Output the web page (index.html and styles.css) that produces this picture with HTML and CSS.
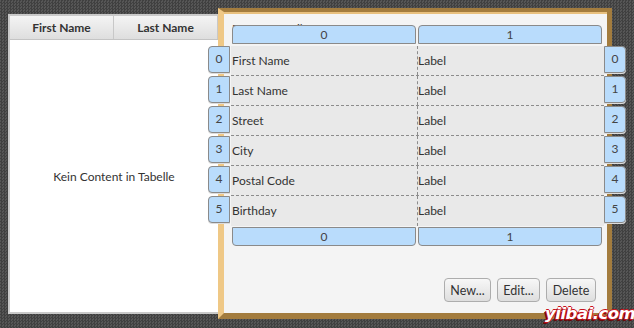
FILE: index.html
```html
<!DOCTYPE html>
<html lang="de">
  <head>
    <meta charset="UTF-8" />
    <title>Person Overview</title>
    <link rel="stylesheet" href="styles.css">
  </head>
  <body>
    <div class="tabelle">
      <div class="kopf">
        <div class="spalte">First Name</div>
        <div class="spalte">Last Name</div>
      </div>
      <div class="leer">Kein Content in Tabelle</div>
    </div>

    <div class="rahmen">
      <div class="blatt">
        <span class="titel">Person Details</span>

        <div class="spalten oben">
          <div class="sp">0</div>
          <div class="sp">1</div>
        </div>

        <div class="raster">
          <div class="zeile"><span class="nr links">0</span><span class="zelle">First Name</span><span class="zelle">Label</span><span class="nr rechts">0</span></div>
          <div class="zeile"><span class="nr links">1</span><span class="zelle">Last Name</span><span class="zelle">Label</span><span class="nr rechts">1</span></div>
          <div class="zeile"><span class="nr links">2</span><span class="zelle">Street</span><span class="zelle">Label</span><span class="nr rechts">2</span></div>
          <div class="zeile"><span class="nr links">3</span><span class="zelle">City</span><span class="zelle">Label</span><span class="nr rechts">3</span></div>
          <div class="zeile"><span class="nr links">4</span><span class="zelle">Postal Code</span><span class="zelle">Label</span><span class="nr rechts">4</span></div>
          <div class="zeile"><span class="nr links">5</span><span class="zelle">Birthday</span><span class="zelle">Label</span><span class="nr rechts">5</span></div>
        </div>

        <div class="spalten unten">
          <div class="sp">0</div>
          <div class="sp">1</div>
        </div>

        <div class="knoepfe">
          <button class="neu">New...</button>
          <button class="bearbeiten">Edit...</button>
          <button class="loeschen">Delete</button>
        </div>
      </div>
    </div>

    <div class="wasserzeichen">yiibai.com</div>
  </body>
</html>
```

FILE: styles.css
```css
* {
  margin: 0;
  padding: 0;
  box-sizing: border-box;
}

body {
  width: 634px;
  height: 328px;
  overflow: hidden;
  display: flex;
  align-items: flex-start;
  font-family: Lato, "Liberation Sans", sans-serif;
  font-size: 12px;
  color: #333;
  background-color: #4a4a4a;
  background-image: repeating-conic-gradient(#404040 0 25%, #565656 0 50%);
  background-size: 3px 3px;
}

/* linke Tabelle */
.tabelle {
  margin: 14px 0 0 8px;
  width: 212px;
  height: 300px;
  background: #fff;
  border: 2px solid #c9c9c9;
  border-right: none;
  display: flex;
  flex-direction: column;
}

.kopf {
  display: flex;
  height: 24px;
  border-bottom: 1px solid #c4c4c4;
  background: linear-gradient(#f4f4f4, #dedede);
}

.spalte {
  width: 104px;
  display: flex;
  justify-content: center;
  align-items: center;
  font-weight: bold;
  border-right: 1px solid #c8c8c8;
}

.leer {
  flex: 1;
  display: flex;
  justify-content: center;
  align-items: center;
  padding-right: 2px;
}

/* rechter Bereich */
.rahmen {
  position: relative;
  margin: 8px 0 0 -2px;
  width: 394px;
  height: 311px;
  border-top: 4px solid #a37c3e;
  border-left: 6px solid #efc886;
  border-right: 5px solid #a37c3e;
  border-bottom: 6px solid #a37c3e;
  background: #f4f4f4;
  box-shadow: inset 0 2px 0 #e8c07e;
}

.blatt {
  position: relative;
  height: 100%;
  padding: 13px 0 0 7px;
  display: flex;
  flex-direction: column;
}

.titel {
  position: absolute;
  top: 9px;
  left: 8px;
  font-size: 12px;
  color: #444;
}

.spalten {
  position: relative;
  display: grid;
  grid-template-columns: 186px 186px;
  height: 19px;
}

.sp {
  margin: 0 1px;
  background: #b9dcfc;
  border: 1px solid #8a8a8a;
  display: flex;
  justify-content: center;
  align-items: center;
  color: #444;
}

.oben .sp {
  border-radius: 4px 4px 0 0;
}

.unten {
  margin-top: 1px;
}

.unten .sp {
  border-radius: 0 0 4px 4px;
}

.raster {
  margin-top: 2px;
  width: 373px;
  background: #e9e9e9;
}

.zeile {
  position: relative;
  height: 30px;
  display: grid;
  grid-template-columns: 186px 187px;
  border-bottom: 1px dashed #8c8c8c;
}

.zeile:last-child {
  border-bottom: none;
}

.zelle {
  display: flex;
  align-items: center;
  padding-left: 1px;
  padding-bottom: 1px;
}

.zelle + .zelle {
  border-left: 1px dashed #8c8c8c;
  padding-left: 0;
}

.nr {
  position: absolute;
  top: 0;
  width: 22px;
  height: 27px;
  background: #b9dcfc;
  border: 1px solid #8a8a8a;
  display: flex;
  justify-content: center;
  align-items: center;
  padding-bottom: 2px;
  color: #444;
  box-shadow: 0 1px 0 #ddd;
}

.links {
  left: -23px;
  border-radius: 4px 0 0 4px;
}

.rechts {
  right: -22px;
  border-radius: 0 4px 4px 0;
}

.knoepfe {
  display: flex;
  justify-content: flex-end;
  column-gap: 6px;
  margin-top: 32px;
  padding-right: 11px;
}

.knoepfe button {
  height: 24px;
  padding: 0;
  font-family: Lato, "Liberation Sans", sans-serif;
  font-size: 12.5px;
  color: #333;
  background: linear-gradient(#f7f7f7, #dedede);
  border: 1px solid #adadad;
  border-radius: 4px;
}

.neu {
  width: 47px;
}

.bearbeiten {
  width: 43px;
}

.loeschen {
  width: 50px;
}

.wasserzeichen {
  position: absolute;
  left: 545px;
  top: 304px;
  font-family: "DejaVu Sans", sans-serif;
  font-size: 16.5px;
  font-weight: bold;
  font-style: italic;
  color: #fff;
  letter-spacing: -0.5px;
  text-shadow: -1px 1px 0 #c8101a, 1px 0 0 #c8101a, 0 -1px 0 #c8101a, -2px 2px 0 #6a0a0a;
}
```
